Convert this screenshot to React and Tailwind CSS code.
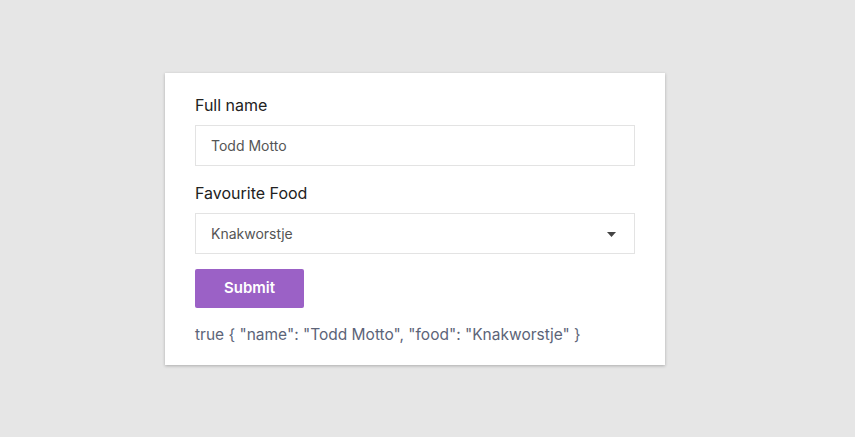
import React, { useState } from 'react';

const App = () => {
    const [name, setName] = useState('Todd Motto');
    const [food, setFood] = useState('Knakworstje');

    return (
        <div className="min-h-[437px] w-full bg-[#e6e6e6] pt-[73px] font-['Inter',sans-serif]">
            <div className="ml-[165px] w-[500px] bg-white px-[30px] pt-[22px] pb-[20px] shadow-[0_1px_3px_rgba(0,0,0,0.25)]">
                <label className="block text-[16px] leading-[20px] text-[#222]">Full name</label>
                <input
                    value={name}
                    onChange={e => setName(e.target.value)}
                    className="mt-[10px] block h-[41px] w-full border border-[#e3e3e3] px-[15px] text-[14px] text-[#555] outline-none"
                />

                <label className="mt-[17px] block text-[16px] leading-[20px] text-[#222]">Favourite Food</label>
                <div className="relative mt-[10px] h-[41px] w-full border border-[#e3e3e3]">
                    <select
                        value={food}
                        onChange={e => setFood(e.target.value)}
                        className="h-full w-full appearance-none bg-transparent px-[15px] text-[14px] text-[#555] outline-none"
                    >
                        <option>Knakworstje</option>
                        <option>Stroopwafel</option>
                        <option>Bitterballen</option>
                    </select>
                    <svg width="9" height="5" viewBox="0 0 9 5" className="pointer-events-none absolute right-[18px] top-[18px]">
                        <path d="M0 0H9L4.5 5Z" fill="#444" />
                    </svg>
                </div>

                <button className="mt-[15px] block h-[39px] w-[109px] rounded-[2px] bg-[#9b61c6] text-[15px] font-semibold text-white">
                    Submit
                </button>

                <p className="mt-[17px] text-[15.5px] leading-[20px] text-[#5c6478]">
                    true {'{'} "name": "{name}", "food": "{food}" {'}'}
                </p>
            </div>
        </div>
    );
};

export default App;
